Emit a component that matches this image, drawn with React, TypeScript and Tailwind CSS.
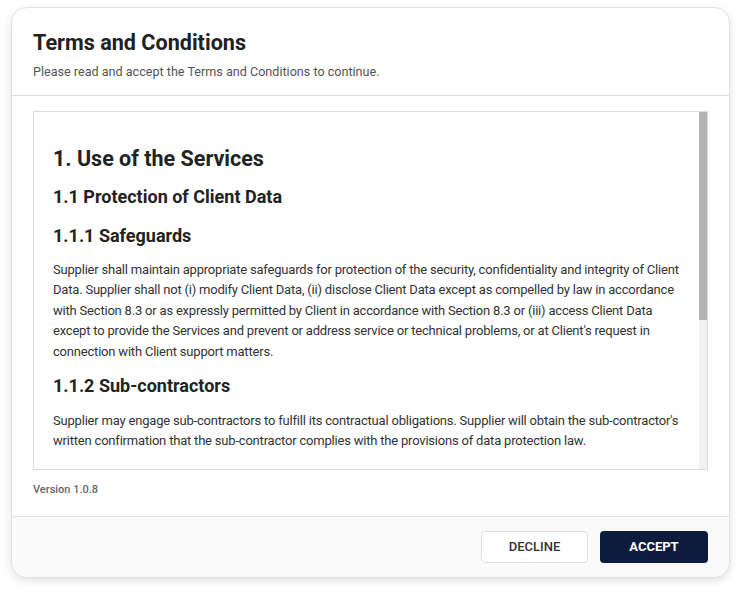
import React from 'react'

const paragraphs = {
  safeguards:
    "Supplier shall maintain appropriate safeguards for protection of the security, confidentiality and integrity of Client Data. Supplier shall not (i) modify Client Data, (ii) disclose Client Data except as compelled by law in accordance with Section 8.3 or as expressly permitted by Client in accordance with Section 8.3 or (iii) access Client Data except to provide the Services and prevent or address service or technical problems, or at Client's request in connection with Client support matters.",
  subcontractors:
    "Supplier may engage sub-contractors to fulfill its contractual obligations. Supplier will obtain the sub-contractor's written confirmation that the sub-contractor complies with the provisions of data protection law.",
}

export default function App() {
  return (
    <div className="min-h-screen bg-white px-[11px] pt-[7px] pb-[11px] font-['Roboto',sans-serif]">
      <div className="flex h-[571px] flex-col overflow-hidden rounded-[16px] border border-[#e2e2e2] bg-white shadow-[0_3px_8px_rgba(0,0,0,0.12)]">
        {/* Header */}
        <div className="border-b border-[#e0e0e0] px-[21px] pt-[21px] pb-[15px]">
          <h1 className="text-[21.6px] leading-[28px] font-bold text-[#212121]">Terms and Conditions</h1>
          <p className="mt-[7px] text-[12.6px] leading-[16px] text-[#555]">
            Please read and accept the Terms and Conditions to continue.
          </p>
        </div>

        {/* Body */}
        <div className="flex-1 px-[21px] pt-[15px]">
          <div className="flex h-[359px] border border-[#dcdcdc]">
            <div className="flex-1 overflow-hidden pt-[33px] pr-[16px] pl-[19px] text-[#222]">
              <h2 className="text-[21.5px] leading-[28px] font-bold">1. Use of the Services</h2>
              <h3 className="mt-[11px] text-[18px] leading-[26px] font-bold">1.1 Protection of Client Data</h3>
              <h4 className="mt-[13px] text-[18px] leading-[26px] font-bold">1.1.1 Safeguards</h4>
              <p className="mt-[11px] text-[13px] leading-[20.4px] tracking-[-0.2px] text-[#333]">
                {paragraphs.safeguards}
              </p>
              <h4 className="mt-[11px] text-[18px] leading-[26px] font-bold">1.1.2 Sub-contractors</h4>
              <p className="mt-[12px] text-[13px] leading-[20.4px] tracking-[-0.2px] text-[#333]">
                {paragraphs.subcontractors}
              </p>
            </div>
            {/* scrollbar */}
            <div className="w-[8px] bg-[#f1f1f1]">
              <div className="h-[208px] bg-[#b4b4b4]" />
            </div>
          </div>
          <div className="mt-[12px] text-[11px] leading-[16px] font-medium text-[#666]">Version 1.0.8</div>
        </div>

        {/* Footer */}
        <div className="flex justify-end gap-[12px] border-t border-[#e0e0e0] bg-[#fafafa] px-[21px] py-[14px]">
          <button className="h-[32px] w-[107px] rounded-[4px] border border-[#dedede] bg-white text-[13px] font-medium text-[#333]">
            DECLINE
          </button>
          <button className="h-[32px] w-[108px] rounded-[4px] bg-[#0d1b3c] text-[13px] font-bold text-white">
            ACCEPT
          </button>
        </div>
      </div>
    </div>
  )
}
